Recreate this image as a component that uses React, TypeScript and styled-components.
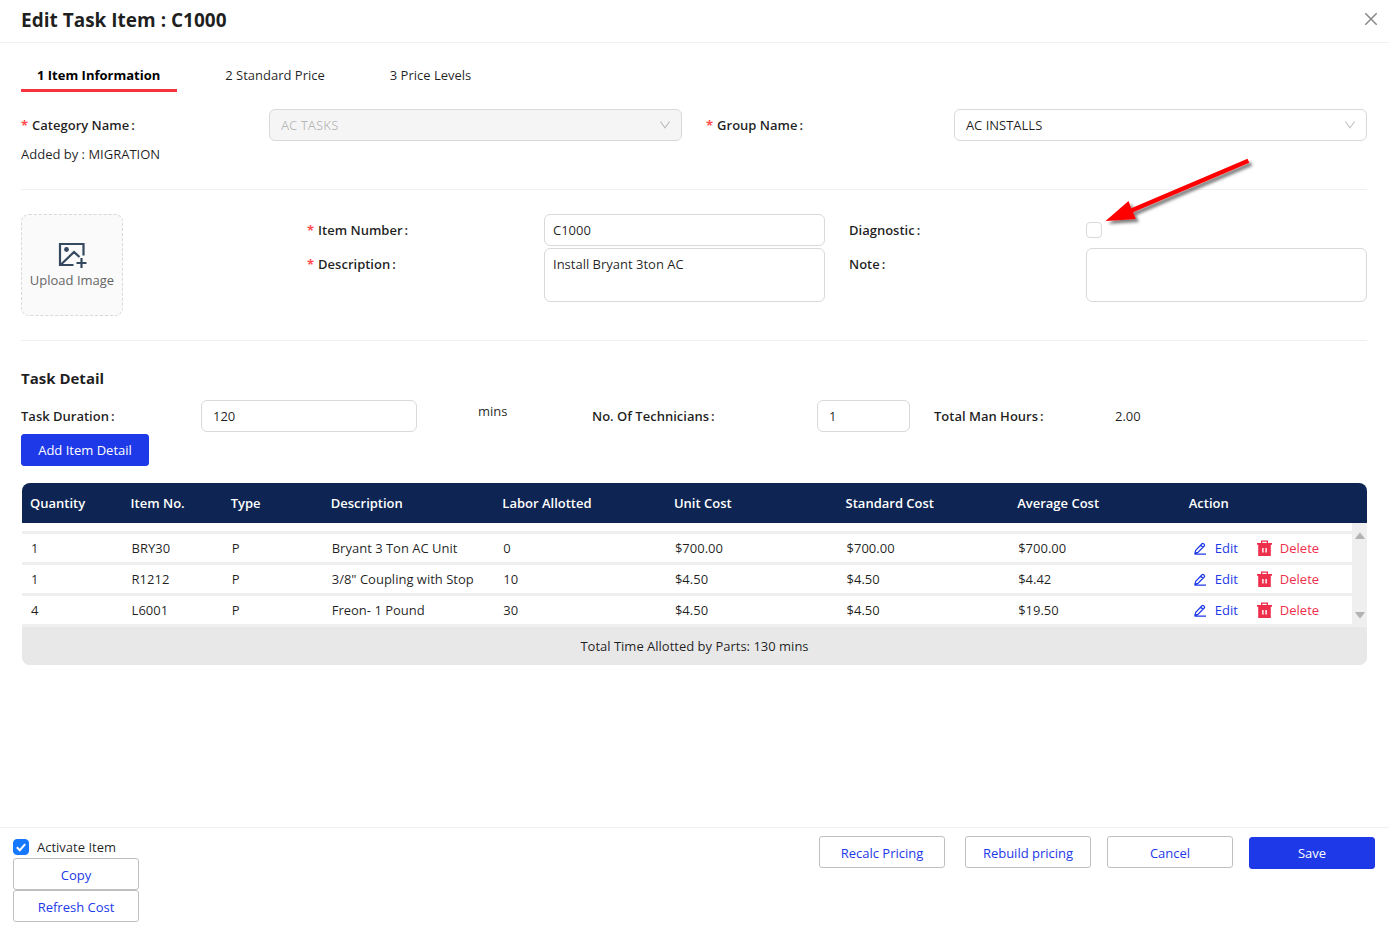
import React from 'react';
import styled, { createGlobalStyle, css } from 'styled-components';

const Global = createGlobalStyle`
  *, *::before, *::after { box-sizing: border-box; }
  body { margin: 0; background: #fff; }
  body, button, input, select, textarea {
    font-family: "Open Sans", "Noto Sans", sans-serif;
    font-size: 13px;
    line-height: 22px;
    color: rgba(0, 0, 0, 0.88);
  }
`;

const Page = styled.div`
  min-height: 100vh;
  display: flex;
  flex-direction: column;
`;

const Header = styled.header`
  display: flex;
  align-items: center;
  justify-content: space-between;
  height: 43px;
  padding: 0 11px 4px 21px;
  border-bottom: 1px solid #f0f0f0;
`;

const Title = styled.h1`
  margin: 0;
  padding-top: 2px;
  font-size: 19px;
  line-height: 28px;
  font-weight: 700;
`;

const CloseButton = styled.button`
  display: flex;
  padding: 0;
  border: 0;
  background: none;
  color: #868686;
`;

const Body = styled.main`
  flex: 1;
  padding: 15px 22px 24px 21px;
`;

const Tabs = styled.nav`
  display: flex;
  gap: 32px;
  margin-bottom: 17px;
`;

const Tab = styled.button<{ $active?: boolean }>`
  height: 34px;
  padding: 2px 17px 0 16px;
  border: 0;
  border-bottom: 3px solid ${p => (p.$active ? '#f5333f' : 'transparent')};
  background: none;
  font-weight: ${p => (p.$active ? 700 : 400)};
  color: ${p => (p.$active ? '#000' : 'rgba(0, 0, 0, 0.88)')};
`;

const Columns = styled.div<{ $cols: string }>`
  display: grid;
  grid-template-columns: ${p => p.$cols};
  column-gap: 24px;
`;

const Field = styled.div<{ $split: string }>`
  display: grid;
  grid-template-columns: ${p => p.$split};
  align-items: start;
`;

const Label = styled.label<{ $required?: boolean }>`
  line-height: 32px;
  font-weight: 600;
  white-space: nowrap;
  &::after { content: ':'; margin-left: 2px; }
  ${p => p.$required && css`
    &::before { content: '*'; margin-right: 4px; color: #ff4d4f; font-weight: 700; }
  `}
`;

const control = css`
  width: 100%;
  min-width: 0;
  margin: 0;
  border: 1px solid #d9d9d9;
  border-radius: 6px;
  background: #fff;
  outline: none;
`;

const TextInput = styled.input`
  ${control}
  height: 32px;
  padding: 0 11px 0 8px;
`;

const NumberInput = styled(TextInput)`
  padding-left: 11px;
`;

const TextArea = styled.textarea`
  ${control}
  display: block;
  height: 54px;
  padding: 4px 8px;
  resize: none;
`;

const SelectWrap = styled.div`
  position: relative;
  svg { position: absolute; right: 11px; top: 10px; pointer-events: none; }
`;

const Select = styled.select`
  ${control}
  display: block;
  height: 32px;
  padding: 0 11px;
  appearance: none;
  &:disabled { background: #f5f5f5; color: rgba(0, 0, 0, 0.25); opacity: 1; }
`;

const Checkbox = styled.input`
  flex: none;
  width: 16px;
  height: 16px;
  margin: 0;
  appearance: none;
  border: 1px solid #d9d9d9;
  border-radius: 4px;
  background: #fff;
  &:checked { border-color: #1677ff; background: #1677ff; }
`;

const CheckCell = styled.div`
  position: relative;
  display: flex;
  align-items: center;
  height: 32px;
`;

const Arrow = styled.svg`
  position: absolute;
  left: 0;
  top: -64px;
  pointer-events: none;
`;

const AddedBy = styled.p`
  margin: 2px 0 24px;
`;

const Divider = styled.hr`
  margin: 24px 0;
  border: 0;
  border-top: 1px solid #f0f0f0;
`;

const Stack = styled.div`
  display: grid;
  align-content: start;
  row-gap: 2px;
`;

const UploadButton = styled.button`
  display: flex;
  flex-direction: column;
  align-items: center;
  justify-content: center;
  width: 102px;
  height: 102px;
  padding: 2px 0 0;
  border: 1px dashed #d9d9d9;
  border-radius: 8px;
  background: #fafafa;
  color: #666;
  white-space: nowrap;
`;

const SectionTitle = styled.h2`
  margin: 0 0 8px;
  font-size: 15px;
  line-height: 27px;
  font-weight: 700;
`;

const Unit = styled.span`
  padding-left: 37px;
`;

const Value = styled.output`
  line-height: 32px;
`;

const Button = styled.button`
  width: 126px;
  height: 32px;
  padding: 2px 14px 0;
  border: 1px solid #bfbfbf;
  border-radius: 3px;
  background: #fff;
  color: #1d39e8;
  white-space: nowrap;
`;

const PrimaryButton = styled(Button)`
  padding: 0 14px;
  border-color: #1d39e8;
  background: #1d39e8;
  color: #fff;
`;

const AddButton = styled(PrimaryButton)`
  width: 128px;
`;

const SaveButton = styled(PrimaryButton)`
  margin-top: 1px;
`;

const AddRow = styled.div`
  display: flex;
  margin: 2px 0 17px;
`;

const TableCard = styled.div`
  margin-left: 1px;
  border-radius: 8px;
  background: #efefef;
  overflow: hidden;
`;

const Table = styled.table`
  width: 100%;
  table-layout: fixed;
  border-collapse: separate;
  border-spacing: 0;
`;

const Col = styled.col<{ $width?: string }>`
  width: ${p => p.$width ?? 'auto'};
`;

const HeadCell = styled.th`
  height: 40px;
  padding: 0 0 0 8px;
  background: #0e2452;
  color: #fff;
  font-weight: 600;
  text-align: left;
  white-space: nowrap;
`;

const Spacer = styled.td`
  height: 8px;
  padding: 0;
  background: #fff;
`;

const Cell = styled.td`
  height: 31px;
  padding: 0 0 0 9px;
  border-top: 3px solid #efefef;
  background: #fff;
  white-space: nowrap;
`;

const RailCell = styled.td`
  padding: 4px 0 0;
  background: #efefef;
`;

const Rail = styled.div`
  display: flex;
  flex-direction: column;
  align-items: center;
  justify-content: space-between;
  height: 87px;
`;

const Actions = styled.div`
  display: flex;
  gap: 19px;
  padding-left: 3px;
`;

const LinkButton = styled.button<{ $danger?: boolean }>`
  display: flex;
  align-items: center;
  gap: 8px;
  padding: 0;
  border: 0;
  background: none;
  color: ${p => (p.$danger ? '#ee2f4c' : '#1d39e8')};
`;

const TableFooter = styled.div`
  height: 38px;
  margin-top: 3px;
  background: #e8e8e8;
  line-height: 38px;
  text-align: center;
`;

const Footer = styled.footer`
  display: flex;
  justify-content: space-between;
  padding: 8px 14px 13px 13px;
  border-top: 1px solid #f0f0f0;
`;

const FooterLeft = styled.div`
  display: flex;
  flex-direction: column;
`;

const FooterRight = styled.div`
  display: flex;
  align-items: start;
  gap: 16px;
`;

const PricingButtons = styled.div`
  display: flex;
  gap: 20px;
`;

const CheckLabel = styled.label`
  display: flex;
  align-items: center;
  gap: 8px;
`;

const CheckMark = styled.span`
  position: relative;
  display: flex;
  svg { position: absolute; left: 0; top: 0; pointer-events: none; }
`;

const DownIcon = () => (
  <svg width="12" height="12" viewBox="64 64 896 896" fill="rgba(0,0,0,0.25)">
    <path d="M884 256h-75c-5.100 0-9.900 2.500-12.900 6.600L512 654.200 227.900 262.600c-3-4.100-7.800-6.600-12.900-6.600h-75c-6.500 0-10.300 7.400-6.500 12.700l352.600 486.100c12.800 17.600 39 17.600 51.700 0l352.600-486.100c3.900-5.300.1-12.700-6.400-12.700z" />
  </svg>
);

const EditIcon = () => (
  <svg width="14" height="14" viewBox="0 0 14 14" fill="none" stroke="#1d39e8" strokeWidth="1.200">
    <path d="M2 12.200 2.700 9.300 9 2.800Q9.800 2.100 10.600 2.800L11.200 3.400Q12 4.200 11.200 5L4.900 11.400zM7.800 4.200l2.200 2.100M1.500 13.100h11.500" />
  </svg>
);

const TrashIcon = () => (
  <svg width="15" height="16" viewBox="0 0 15 16">
    <path fill="#ee2f4c" fillRule="evenodd" d="M4 .5h7V3h4v1.700h-1.200V16H1.200V4.700H0V3h4zM5.300 1.700V3h4.400V1.700zM5.200 8v4.500h1.400V8zm3.200 0v4.500h1.400V8z" />
  </svg>
);

const itemSplit = '237fr 281fr';

const columns = [
  { name: 'Quantity', width: '7.48%' },
  { name: 'Item No.', width: '7.44%' },
  { name: 'Type', width: '7.44%' },
  { name: 'Description', width: '12.76%' },
  { name: 'Labor Allotted', width: '12.76%' },
  { name: 'Unit Cost', width: '12.76%' },
  { name: 'Standard Cost', width: '12.76%' },
  { name: 'Average Cost', width: '12.76%' },
  { name: 'Action', width: undefined },
];

const items = [
  ['1', 'BRY30', 'P', 'Bryant 3 Ton AC Unit', '0', '$700.00', '$700.00', '$700.00'],
  ['1', 'R1212', 'P', '3/8" Coupling with Stop', '10', '$4.50', '$4.50', '$4.42'],
  ['4', 'L6001', 'P', 'Freon- 1 Pound', '30', '$4.50', '$4.50', '$19.50'],
];

export default function App() {
  return (
    <Page>
      <Global />
      <Header>
        <Title>Edit Task Item : C1000</Title>
        <CloseButton aria-label="Close">
          <svg width="14" height="14" viewBox="0 0 14 14" stroke="currentColor" strokeWidth="1.500">
            <path d="M1.300 1.300l11.400 11.400M12.700 1.300 1.300 12.700" />
          </svg>
        </CloseButton>
      </Header>

      <Body>
        <Tabs>
          <Tab $active>1 Item Information</Tab>
          <Tab>2 Standard Price</Tab>
          <Tab>3 Price Levels</Tab>
        </Tabs>

        <Columns $cols="1fr 1fr">
          <Field $split="3fr 5fr">
            <Label htmlFor="category" $required>Category Name</Label>
            <SelectWrap>
              <Select id="category" disabled defaultValue="AC TASKS"><option>AC TASKS</option></Select>
              <DownIcon />
            </SelectWrap>
          </Field>
          <Field $split="3fr 5fr">
            <Label htmlFor="group" $required>Group Name</Label>
            <SelectWrap>
              <Select id="group" defaultValue="AC INSTALLS"><option>AC INSTALLS</option></Select>
              <DownIcon />
            </SelectWrap>
          </Field>
        </Columns>
        <AddedBy>Added by : MIGRATION</AddedBy>
        <Divider />

        <Columns $cols="262fr 518fr 518fr">
          <UploadButton>
            <svg width="30" height="28" viewBox="0 0 30 28" fill="none" stroke="#34495e" strokeWidth="2.200">
              <path d="M16.500 24H3V3h23.500v11.500M4 23.500 17 11l5.500 5M24.500 17v10M19.500 22h10" />
              <circle cx="9.500" cy="8.500" r="2.400" fill="#34495e" stroke="none" />
            </svg>
            Upload Image
          </UploadButton>
          <Stack>
            <Field $split={itemSplit}>
              <Label htmlFor="number" $required>Item Number</Label>
              <TextInput id="number" defaultValue="C1000" />
            </Field>
            <Field $split={itemSplit}>
              <Label htmlFor="desc" $required>Description</Label>
              <TextArea id="desc" defaultValue="Install Bryant 3ton AC" />
            </Field>
          </Stack>
          <Stack>
            <Field $split={itemSplit}>
              <Label htmlFor="diag">Diagnostic</Label>
              <CheckCell>
                <Checkbox id="diag" type="checkbox" />
                <Arrow width="172" height="84" viewBox="0 0 172 84">
                  <defs>
                    <filter id="arrow-shadow" x="-10%" y="-10%" width="120%" height="130%">
                      <feDropShadow dx="3" dy="3" stdDeviation="1.500" floodColor="#000" floodOpacity="0.5" />
                    </filter>
                  </defs>
                  <path
                    fill="#f00"
                    filter="url(#arrow-shadow)"
                    d="M19.500 71 42.500 51 45.200 58.200 161.500 8.800 163.300 12.800 47 62.200 49.800 69z"
                  />
                </Arrow>
              </CheckCell>
            </Field>
            <Field $split={itemSplit}>
              <Label htmlFor="note">Note</Label>
              <TextArea id="note" />
            </Field>
          </Stack>
        </Columns>
        <Divider />

        <SectionTitle>Task Detail</SectionTitle>
        <Columns $cols="396fr 127fr 318fr 433fr">
          <Field $split="180fr 216fr">
            <Label htmlFor="duration">Task Duration</Label>
            <NumberInput id="duration" defaultValue="120" />
          </Field>
          <Unit>mins</Unit>
          <Field $split="225fr 93fr">
            <Label htmlFor="techs">No. Of Technicians</Label>
            <NumberInput id="techs" defaultValue="1" />
          </Field>
          <Field $split="181fr 252fr">
            <Label htmlFor="hours">Total Man Hours</Label>
            <Value id="hours">2.00</Value>
          </Field>
        </Columns>
        <AddRow>
          <AddButton>Add Item Detail</AddButton>
        </AddRow>

        <TableCard>
          <Table>
            <colgroup>
              {columns.map(c => <Col key={c.name} $width={c.width} />)}
              <Col $width="15px" />
            </colgroup>
            <thead>
              <tr>
                {columns.map(c => <HeadCell key={c.name}>{c.name}</HeadCell>)}
                <HeadCell aria-hidden="true" />
              </tr>
            </thead>
            <tbody>
              <tr>
                <Spacer colSpan={columns.length} />
                <RailCell rowSpan={items.length + 1}>
                  <Rail>
                    <svg width="10" height="8" viewBox="0 0 10 8" fill="#b3b3b3"><path d="M5 .5 9.500 6q.3 1-.7 1H1.200q-1 0-.7-1z" /></svg>
                    <svg width="10" height="8" viewBox="0 0 10 8" fill="#b3b3b3"><path d="M5 7.500.5 2q-.3-1 .7-1h7.600q1 0 .7 1z" /></svg>
                  </Rail>
                </RailCell>
              </tr>
              {items.map(row => (
                <tr key={row[1]}>
                  {row.map((text, i) => <Cell key={i}>{text}</Cell>)}
                  <Cell>
                    <Actions>
                      <LinkButton><EditIcon />Edit</LinkButton>
                      <LinkButton $danger><TrashIcon />Delete</LinkButton>
                    </Actions>
                  </Cell>
                </tr>
              ))}
            </tbody>
          </Table>
          <TableFooter>Total Time Allotted by Parts: 130 mins</TableFooter>
        </TableCard>
      </Body>

      <Footer>
        <FooterLeft>
          <CheckLabel>
            <CheckMark>
              <Checkbox type="checkbox" defaultChecked />
              <svg width="16" height="16" viewBox="0 0 16 16" fill="none" stroke="#fff" strokeWidth="2">
                <path d="M3.800 8.200 6.800 11.200 12.200 5.200" />
              </svg>
            </CheckMark>
            Activate Item
          </CheckLabel>
          <Button>Copy</Button>
          <Button>Refresh Cost</Button>
        </FooterLeft>
        <FooterRight>
          <PricingButtons>
            <Button>Recalc Pricing</Button>
            <Button>Rebuild pricing</Button>
          </PricingButtons>
          <Button>Cancel</Button>
          <SaveButton>Save</SaveButton>
        </FooterRight>
      </Footer>
    </Page>
  );
}
